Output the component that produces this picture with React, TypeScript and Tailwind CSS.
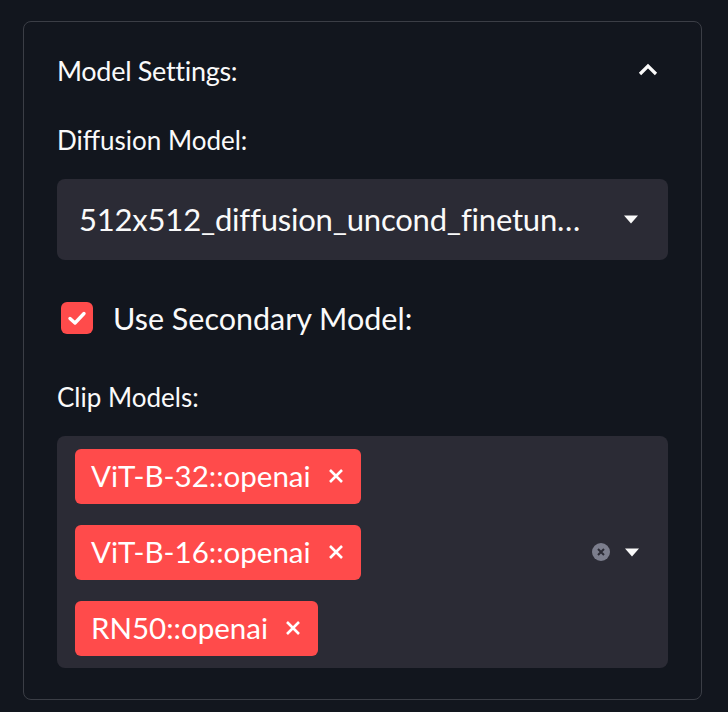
import React from "react";

const tags = ["ViT-B-32::openai", "ViT-B-16::openai", "RN50::openai"];

const Caret = () => (
  <svg width="16" height="9" viewBox="0 0 16 9">
    <path d="M1 0.5 L15 0.5 L8 8.5 Z" fill="#fafafa" />
  </svg>
);

export default function App() {
  return (
    <div
      className="min-h-[712px] w-[728px] bg-[#12161e] pl-[23px] pr-[26px] pt-[21px] text-[#fafafa]"
      style={{ fontFamily: "'Source Sans Pro', Lato, 'Noto Sans', sans-serif" }}
    >
      <div className="rounded-lg border border-[#3b3e46] px-[33px] pb-[31px]">
        {/* header */}
        <div className="flex h-[96px] items-center justify-between">
          <span className="text-[27px] leading-none tracking-[-0.3px]">Model Settings:</span>
          <svg width="22" height="14" viewBox="0 0 22 14" className="mr-[9px]">
            <path d="M3 11 L11 3 L19 11" fill="none" stroke="#fafafa" strokeWidth="3.2" />
          </svg>
        </div>

        {/* diffusion model select */}
        <div className="flex h-[44px] items-center text-[26px] leading-none">Diffusion Model:</div>
        <div className="mt-[17px] flex h-[81px] items-center justify-between rounded-lg bg-[#2b2b35] pl-[22px] pr-[29px]">
          <span className="text-[31px] leading-none tracking-[-0.2px]">512x512_diffusion_uncond_finetun…</span>
          <Caret />
        </div>

        {/* checkbox */}
        <div className="mt-[30px] flex h-[56px] items-center gap-[20px] pl-[4px]">
          <div className="flex h-[32px] w-[32px] items-center justify-center rounded-md bg-[#ff4b4b]">
            <svg width="20" height="16" viewBox="0 0 20 16">
              <path d="M3 8.5 L8 13 L17 3.5" fill="none" stroke="#fff" strokeWidth="3.4" strokeLinecap="round" strokeLinejoin="round" />
            </svg>
          </div>
          <span className="text-[30.5px] leading-none">Use Secondary Model:</span>
        </div>

        {/* clip models multiselect */}
        <div className="mt-[31px] flex h-[40px] items-center text-[26px] leading-none">Clip Models:</div>
        <div className="mt-[19px] flex h-[232px] items-center justify-between rounded-lg bg-[#2b2b35] pl-[18px] pr-[28px]">
          <div className="flex flex-col items-start gap-[21px]">
            {tags.map((t) => (
              <div
                key={t}
                className="flex h-[55px] items-center gap-[16px] rounded-md bg-[#ff4b4b] pl-[16px] pr-[16px] text-[29.5px] leading-none text-white"
              >
                <span>{t}</span>
                <svg width="18" height="18" viewBox="0 0 18 18">
                  <path d="M3 3 L15 15 M15 3 L3 15" stroke="#fff" strokeWidth="2.6" />
                </svg>
              </div>
            ))}
          </div>
          <div className="flex items-center gap-[14px]">
            <div className="flex h-[18px] w-[18px] items-center justify-center rounded-full bg-[#7c7e8d]">
              <svg width="10" height="10" viewBox="0 0 10 10">
                <path d="M2 2 L8 8 M8 2 L2 8" stroke="#2b2b35" strokeWidth="2" />
              </svg>
            </div>
            <Caret />
          </div>
        </div>
      </div>
    </div>
  );
}
